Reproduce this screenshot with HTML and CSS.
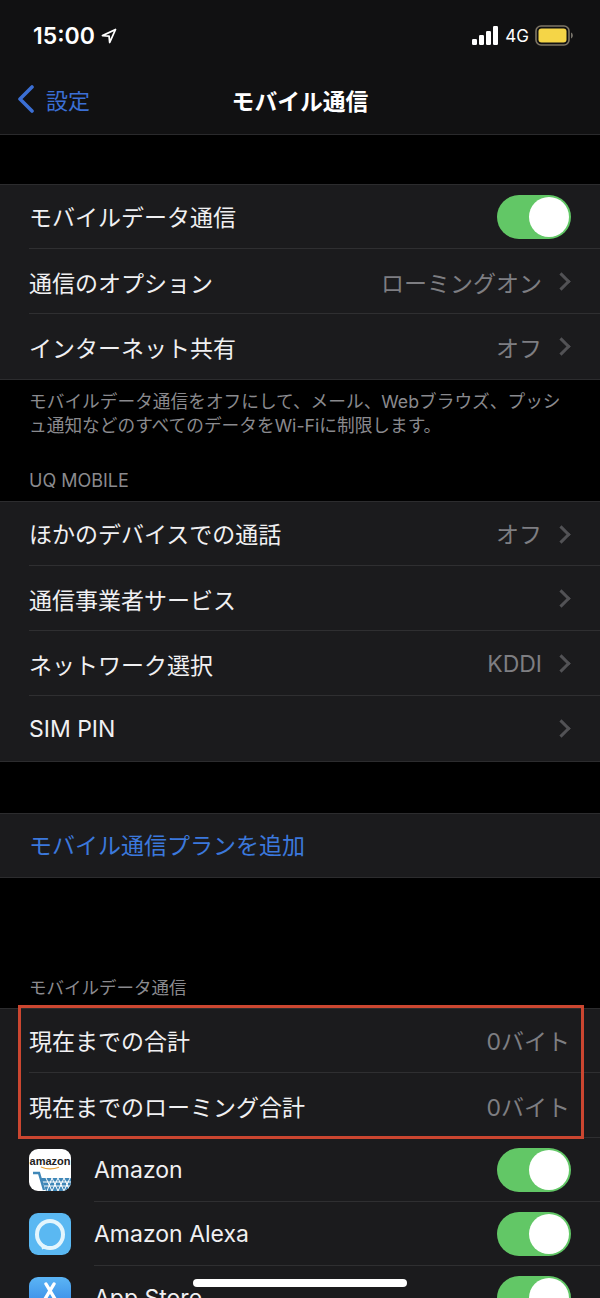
FILE: index.html
```html
<!DOCTYPE html>
<html lang="ja">
<head>
    <meta charset="UTF-8">
    <meta name="viewport" content="width=device-width, initial-scale=1.0">
    <title>モバイル通信</title>
    <link rel="stylesheet" href="styles.css">
</head>
<body>

<div class="screen">
    <header class="top">
        <div class="status">
            <div class="clock">
                <span>15:00</span>
                <svg class="arrow" width="16" height="16" viewBox="0 0 16 16"><path d="M14.500 1.500 1.500 7.600l6.600.5.6 6.400z" fill="none" stroke="#fff" stroke-width="1.800" stroke-linejoin="round"/></svg>
            </div>
            <div class="status-right">
                <svg width="27" height="19" viewBox="0 0 27 19"><rect x="0" y="13" width="5" height="6" rx="1.200" fill="#fff"/><rect x="7" y="9" width="5" height="10" rx="1.200" fill="#fff"/><rect x="14" y="5" width="5" height="14" rx="1.200" fill="#fff"/><rect x="21" y="0" width="5" height="19" rx="1.200" fill="#fff"/></svg>
                <span class="net">4G</span>
                <svg width="38" height="21" viewBox="0 0 38 21"><rect x="1" y="1" width="33" height="19" rx="5" fill="none" stroke="#7d7566" stroke-width="1.600"/><rect x="3.500" y="3.500" width="28" height="14" rx="3" fill="#f5d547"/><path d="M36 7.500c1.200.4 1.800 1.600 1.800 3s-.6 2.600-1.800 3z" fill="#77736a"/></svg>
            </div>
        </div>
        <nav class="nav">
            <div class="back">
                <svg width="18" height="28" viewBox="0 0 18 28"><path d="M15 2 3 14l12 12" fill="none" stroke="#3b6fd4" stroke-width="3.600" stroke-linecap="round" stroke-linejoin="round"/></svg>
                <span>設定</span>
            </div>
            <h1 class="title">モバイル通信</h1>
        </nav>
    </header>

    <section class="group first">
        <div class="row">
            <span class="label">モバイルデータ通信</span>
            <span class="toggle"></span>
        </div>
        <div class="row">
            <span class="label">通信のオプション</span>
            <span class="value">ローミングオン</span>
            <span class="chevron"></span>
        </div>
        <div class="row">
            <span class="label">インターネット共有</span>
            <span class="value">オフ</span>
            <span class="chevron"></span>
        </div>
    </section>
    <p class="note">モバイルデータ通信をオフにして、メール、Webブラウズ、プッシュ通知などのすべてのデータをWi-Fiに制限します。</p>

    <h2 class="section-title carrier">UQ MOBILE</h2>
    <section class="group">
        <div class="row">
            <span class="label">ほかのデバイスでの通話</span>
            <span class="value">オフ</span>
            <span class="chevron"></span>
        </div>
        <div class="row">
            <span class="label">通信事業者サービス</span>
            <span class="chevron"></span>
        </div>
        <div class="row">
            <span class="label">ネットワーク選択</span>
            <span class="value">KDDI</span>
            <span class="chevron"></span>
        </div>
        <div class="row">
            <span class="label">SIM PIN</span>
            <span class="chevron"></span>
        </div>
    </section>

    <section class="group plan">
        <div class="row">
            <span class="label link">モバイル通信プランを追加</span>
        </div>
    </section>

    <h2 class="section-title usage">モバイルデータ通信</h2>
    <section class="group data">
        <div class="row">
            <span class="label">現在までの合計</span>
            <span class="value flush">0バイト</span>
        </div>
        <div class="row">
            <span class="label">現在までのローミング合計</span>
            <span class="value flush">0バイト</span>
        </div>
        <div class="row app">
            <span class="icon amazon">
                <span class="amazon-word">amazon</span>
                <svg width="42" height="42" viewBox="0 0 42 42">
                    <path d="M12 18c6 2.500 12 2.500 18 .2" fill="none" stroke="#e8a33b" stroke-width="1.200"/>
                    <path d="M4 24h6l5 17" fill="none" stroke="#3f87b8" stroke-width="2.400"/>
                    <path d="M12 29h30v8l-4 5H17z" fill="#3f87b8"/>
                    <path d="M14 33h28M15 37h27M17 29l6 13M23 29l6 13M29 29l6 13M35 29l6 13M23 29l-5 13M29 29l-6 13M35 29l-6 13M41 29l-6 13" stroke="#fff" stroke-width="1"/>
                </svg>
            </span>
            <span class="label">Amazon</span>
            <span class="toggle"></span>
        </div>
        <div class="row app">
            <span class="icon alexa">
                <svg width="42" height="42" viewBox="0 0 42 42"><ellipse cx="21" cy="21.500" rx="13" ry="13.500" fill="none" stroke="#e3f5fd" stroke-width="4"/><path d="M12 30l1 6.500 7-2.500z" fill="#e3f5fd"/></svg>
            </span>
            <span class="label">Amazon Alexa</span>
            <span class="toggle"></span>
        </div>
        <div class="row app">
            <span class="icon store">
                <svg width="42" height="42" viewBox="0 0 42 42"><path d="M17 7l9 15M25 7l-9 15" fill="none" stroke="#fff" stroke-width="3.400" stroke-linecap="round"/></svg>
            </span>
            <span class="label">App Store</span>
            <span class="toggle"></span>
        </div>
        <div class="highlight"></div>
    </section>

    <div class="home-bar"></div>
</div>

</body>
</html>
```

FILE: styles.css
```css
* {
    box-sizing: border-box;
}

html, body {
    margin: 0;
    padding: 0;
    background-color: #000;
}

body {
    font-family: Inter, "Noto Sans CJK JP", sans-serif;
    color: #f0f0f2;
}

.screen {
    position: relative;
    width: 600px;
    height: 1298px;
    overflow: hidden;
    background-color: #000;
}

.top {
    height: 135px;
    background-color: #111112;
    border-bottom: 1px solid #2a2a2c;
}

.status {
    height: 71px;
    display: flex;
    justify-content: space-between;
    align-items: center;
    padding: 0 27px 0 33px;
}

.clock {
    display: flex;
    align-items: center;
    gap: 6px;
    font-size: 23px;
    font-weight: 600;
    color: #fff;
}

.status-right {
    display: flex;
    align-items: center;
    gap: 6px;
}

.net {
    font-size: 17px;
    color: #fff;
}

.nav {
    position: relative;
    height: 60px;
    display: flex;
    justify-content: center;
    align-items: center;
    padding-bottom: 1px;
}

.back {
    position: absolute;
    left: 17px;
    top: 12px;
    display: flex;
    align-items: center;
    gap: 11px;
    font-size: 22px;
    color: #3b6fd4;
}

.title {
    margin: 0;
    font-size: 22.800px;
    font-weight: 700;
    color: #fff;
}

.group {
    background-color: #1b1b1d;
    border-top: 1px solid #2c2c2e;
    border-bottom: 1px solid #2c2c2e;
}

.group.first {
    margin-top: 49px;
}

.group.plan {
    margin-top: 51px;
}

.row {
    position: relative;
    height: 65px;
    display: flex;
    align-items: center;
    padding-left: 29px;
    padding-right: 29px;
}

.row:first-child {
    height: 64px;
}

.plan .row:first-child {
    height: 63px;
}

.row + .row::before {
    content: "";
    position: absolute;
    top: -1px;
    left: 29px;
    right: 0;
    border-top: 1px solid #2f2f31;
}

.label {
    flex: 1;
    font-size: 23px;
    white-space: nowrap;
}

.label.link {
    color: #3b78dc;
}

.value {
    font-size: 23px;
    color: #7e7e82;
    margin-right: 12.500px;
}

.value.flush {
    margin-right: 1px;
}

.row:first-child .label,
.row:first-child .value {
    margin-bottom: 3px;
}

.chevron {
    width: 13px;
    height: 13px;
    margin-right: 3.500px;
    border-top: 3px solid #525255;
    border-right: 3px solid #525255;
    transform: rotate(45deg);
}

.toggle {
    position: relative;
    width: 74px;
    height: 44px;
    border-radius: 22px;
    background-color: #62c766;
    flex-shrink: 0;
}

.toggle::after {
    content: "";
    position: absolute;
    top: 2px;
    right: 2px;
    width: 40px;
    height: 40px;
    border-radius: 50%;
    background-color: #fff;
}

.note {
    margin: 0;
    padding: 10px 29px 0;
    height: 90px;
    font-size: 17.700px;
    line-height: 24px;
    color: #8a8a8e;
}

.section-title {
    margin: 0;
    padding: 0 29px;
    font-size: 17.500px;
    font-weight: 400;
    color: #8a8a8e;
}

.section-title.carrier {
    height: 31px;
    line-height: 22px;
    font-size: 18px;
}

.section-title.usage {
    margin-top: 96px;
    height: 34px;
    line-height: 28px;
}

.row.app {
    height: 64px;
}

.row.app::before {
    left: 94px;
}

.row.app .label {
    margin-left: 23px;
}

.icon {
    position: relative;
    width: 42px;
    height: 42px;
    border-radius: 9px;
    overflow: hidden;
    flex-shrink: 0;
}

.icon.amazon {
    background-color: #fff;
}

.amazon-word {
    position: absolute;
    top: 6px;
    left: 0;
    width: 100%;
    text-align: center;
    font-family: "Liberation Sans", sans-serif;
    font-size: 11px;
    line-height: 12px;
    font-weight: 700;
    color: #222;
}

.icon.alexa {
    background-color: #5ab8f2;
}

.icon.store {
    background: linear-gradient(#5bb5f5, #2a78e0);
}

.highlight {
    position: absolute;
    z-index: 2;
    left: 18px;
    top: -4px;
    width: 566px;
    height: 134px;
    border: 3px solid #cb4630;
}

.group.data {
    position: relative;
}

.home-bar {
    position: absolute;
    left: 193px;
    top: 1279px;
    width: 214px;
    height: 8px;
    border-radius: 4px;
    background-color: #fff;
}
```
